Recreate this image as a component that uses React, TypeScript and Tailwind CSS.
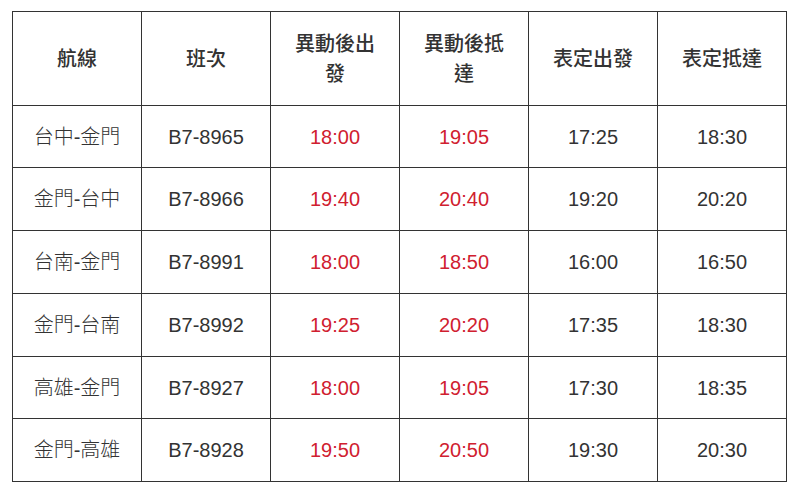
import React from "react";

const rows = [
  ["台中-金門", "B7-8965", "18:00", "19:05", "17:25", "18:30", "h-[62px]"],
  ["金門-台中", "B7-8966", "19:40", "20:40", "19:20", "20:20", "h-[63px]"],
  ["台南-金門", "B7-8991", "18:00", "18:50", "16:00", "16:50", "h-[63px]"],
  ["金門-台南", "B7-8992", "19:25", "20:20", "17:35", "18:30", "h-[63px]"],
  ["高雄-金門", "B7-8927", "18:00", "19:05", "17:30", "18:35", "h-[62px]"],
  ["金門-高雄", "B7-8928", "19:50", "20:50", "19:30", "20:30", "h-[63px]"],
];

const headers = ["航線", "班次", "異動後出發", "異動後抵達", "表定出發", "表定抵達"];

export default function App() {
  return (
    <div className="w-[800px] h-[494px] bg-white pl-[12px] pt-[11px] text-[#333] font-['Liberation_Sans','Noto_Sans_CJK_TC',sans-serif]">
      <table className="table-fixed border-collapse w-[775px]">
        <colgroup>
          {headers.map((h) => (
            <col key={h} className="w-[129px]" />
          ))}
        </colgroup>
        <thead>
          <tr className="h-[94px]">
            {headers.map((h) => (
              <th
                key={h}
                className="border border-[#333] px-[15px] text-[20px] leading-[30px] font-medium text-center align-middle"
              >
                {h}
              </th>
            ))}
          </tr>
        </thead>
        <tbody>
          {rows.map((r) => (
            <tr key={r[1]} className={r[6]}>
              {r.slice(0, 6).map((c, i) => (
                <td
                  key={i}
                  className={
                    "border border-[#333] text-center align-middle text-[20px] leading-[24px] font-light " +
                    (i === 2 || i === 3 ? "text-[#d0202f]" : "")
                  }
                >
                  {c}
                </td>
              ))}
            </tr>
          ))}
        </tbody>
      </table>
    </div>
  );
}
